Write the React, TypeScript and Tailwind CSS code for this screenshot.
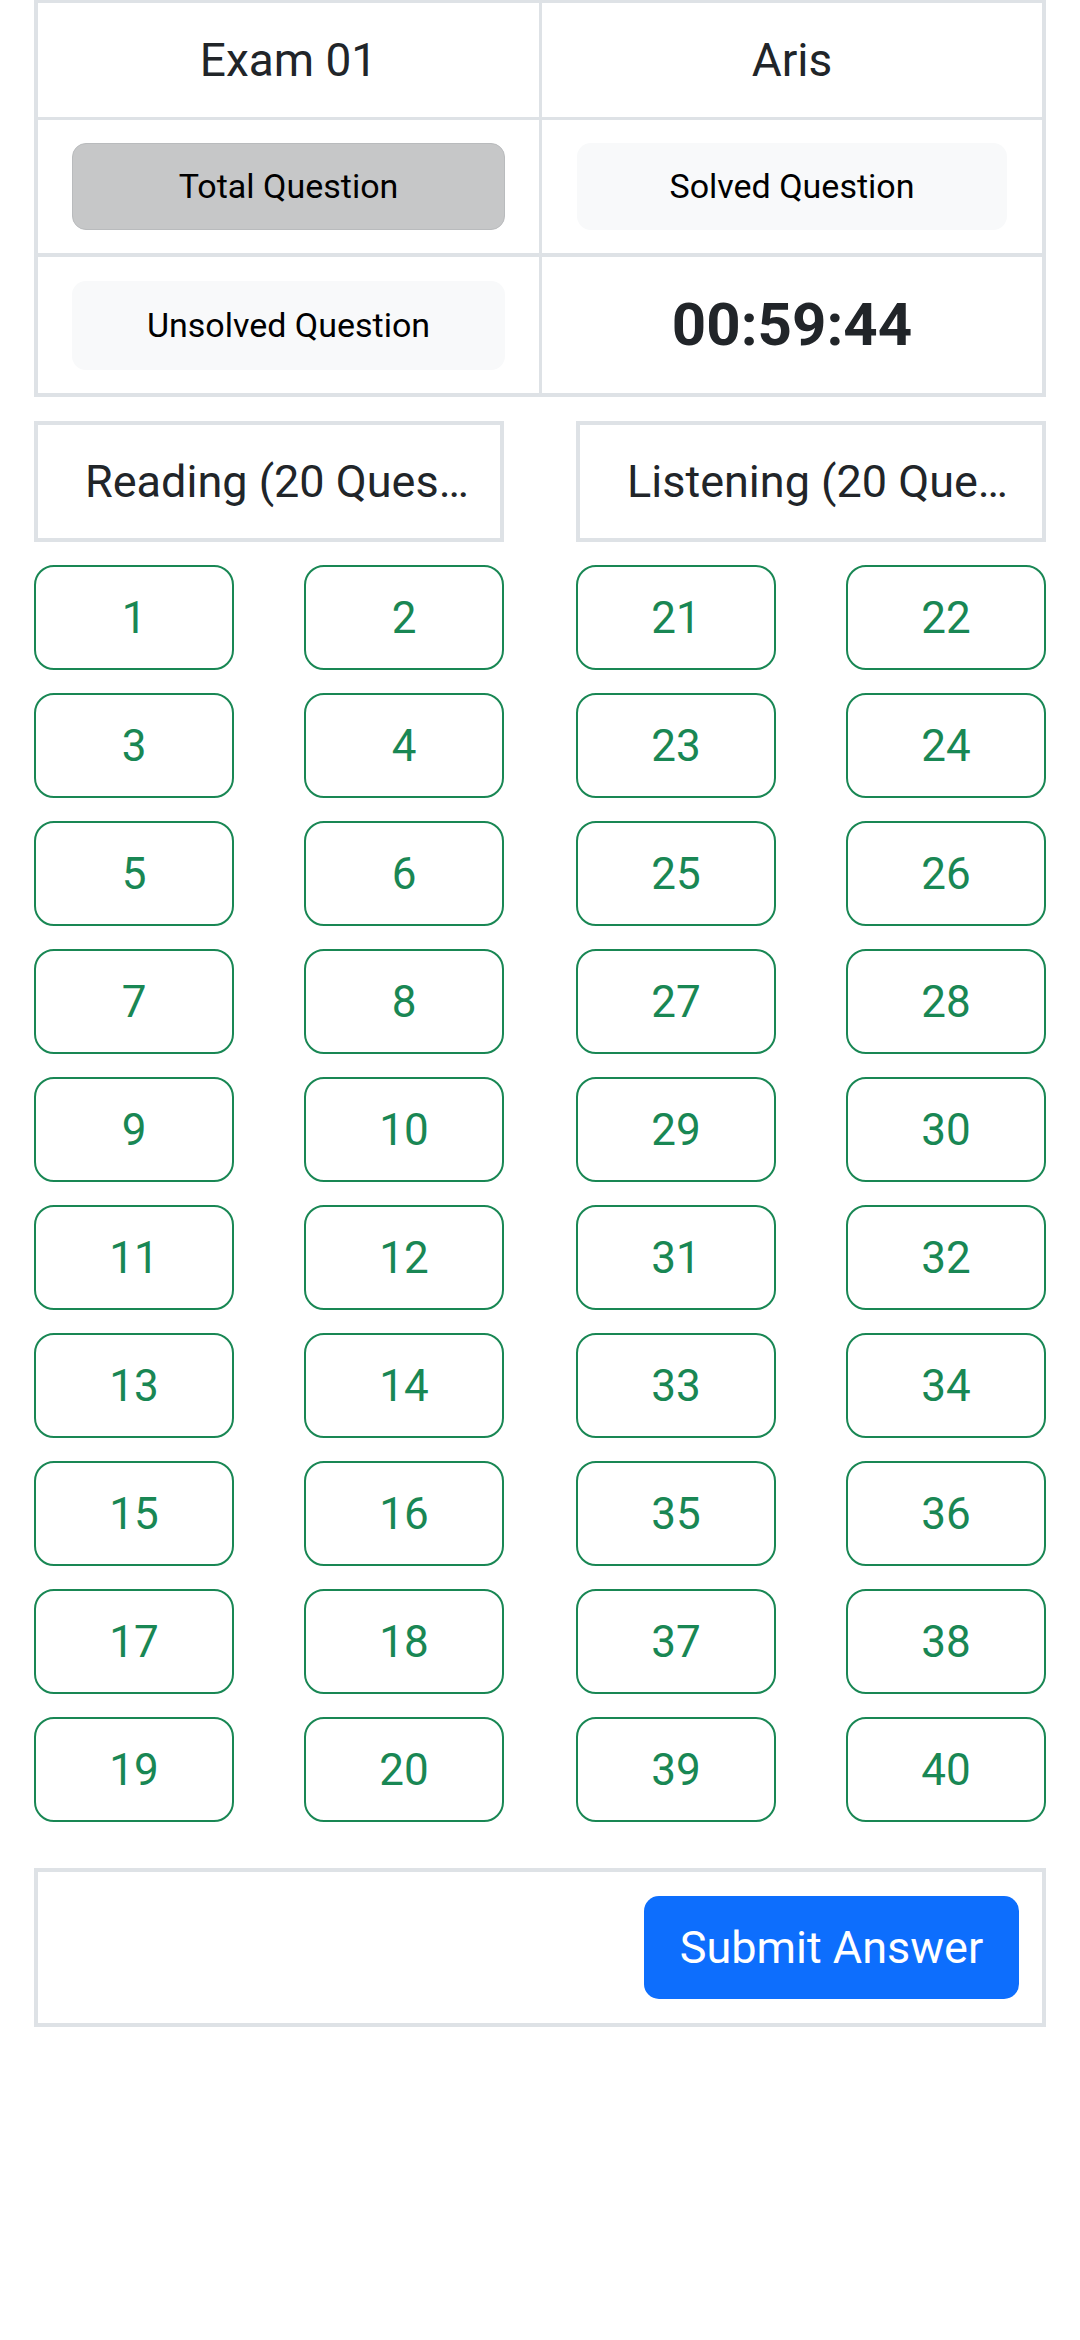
const readingNumbers = Array.from({ length: 20 }, (_, i) => i + 1);
const listeningNumbers = Array.from({ length: 20 }, (_, i) => i + 21);

function QuestionGrid({ numbers }: { numbers: number[] }) {
	return (
		<div className="grid grid-cols-[200px_200px] justify-between gap-y-[23px]">
			{numbers.map((n) => (
				<button
					key={n}
					type="button"
					className="flex h-[105px] items-center justify-center rounded-[20px] border-2 border-[#198754] bg-white text-[44px] text-[#198754]"
				>
					{n}
				</button>
			))}
		</div>
	);
}

function SectionColumn({ title, numbers }: { title: string; numbers: number[] }) {
	return (
		<div className="flex w-[470px] flex-col">
			<div className="flex h-[121px] items-center border-4 border-[#dee2e6] pl-[47px] pr-[22px]">
				<span className="truncate text-[45px] text-[#212529]">{title}</span>
			</div>
			<div className="mt-[23px]">
				<QuestionGrid numbers={numbers} />
			</div>
		</div>
	);
}

export default function App() {
	return (
		<div
			className="min-h-[2340px] bg-white text-[#212529]"
			style={{ fontFamily: "Roboto, 'Noto Sans', sans-serif" }}
		>
			<div className="ml-[34px] w-[1012px]">
				{/* exam info table */}
				<div className="flex flex-col border-4 border-t-[3px] border-[#dee2e6]">
					<div className="flex h-[117px] border-b-[3px] border-[#dee2e6]">
						<div className="flex w-[504px] items-center justify-center border-r-[3px] border-[#dee2e6] text-[46px]">
							Exam 01
						</div>
						<div className="flex flex-1 items-center justify-center text-[46px]">
							Aris
						</div>
					</div>
					<div className="flex h-[137px] border-b-[4px] border-[#dee2e6]">
						<div className="flex w-[504px] items-center border-r-[3px] border-[#dee2e6] px-[34px]">
							<div className="flex h-[87px] w-full items-center justify-center rounded-[14px] border border-[#b9bbbd] bg-[#c6c7c8] text-[34px] text-black">
								Total Question
							</div>
						</div>
						<div className="flex flex-1 items-center px-[35px]">
							<div className="flex h-[87px] w-full items-center justify-center rounded-[14px] bg-[#f8f9fa] text-[34px] text-black">
								Solved Question
							</div>
						</div>
					</div>
					<div className="flex h-[136px]">
						<div className="flex w-[504px] items-center border-r-[3px] border-[#dee2e6] px-[34px]">
							<div className="flex h-[89px] w-full items-center justify-center rounded-[14px] bg-[#f8f9fa] text-[34px] text-black">
								Unsolved Question
							</div>
						</div>
						<div className="flex flex-1 items-center justify-center text-[60px] font-bold">
							00:59:44
						</div>
					</div>
				</div>

				{/* sections */}
				<div className="mt-[24px] flex justify-between">
					<SectionColumn title="Reading (20 Questions)" numbers={readingNumbers} />
					<SectionColumn title="Listening (20 Questions)" numbers={listeningNumbers} />
				</div>

				{/* submit */}
				<div className="mt-[46px] flex justify-end border-4 border-[#dee2e6] py-[24px] pr-[23px]">
					<button
						type="button"
						className="flex h-[103px] w-[375px] items-center justify-center rounded-[15px] bg-[#0d6efd] text-[45px] text-white"
					>
						Submit Answer
					</button>
				</div>
			</div>
		</div>
	);
}
